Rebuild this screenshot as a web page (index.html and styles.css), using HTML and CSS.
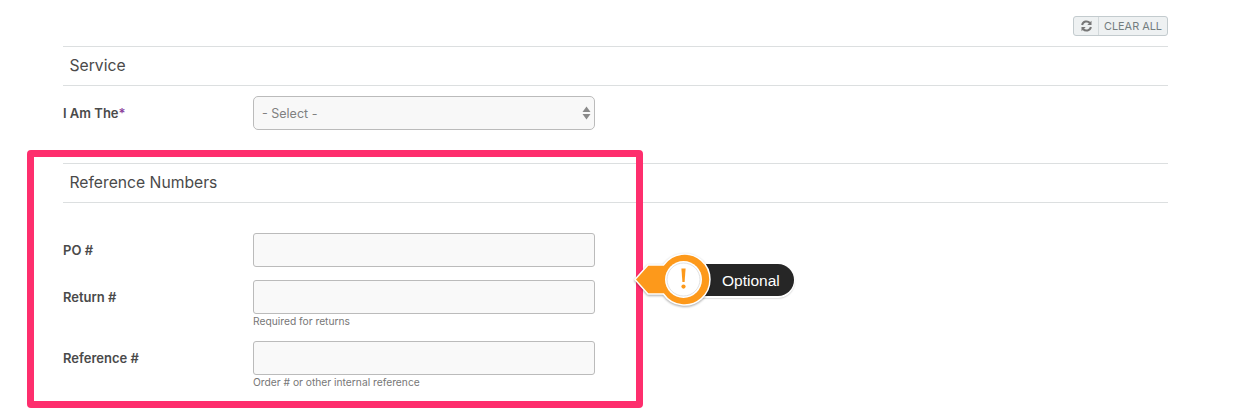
FILE: index.html
```html
<!DOCTYPE html>
<html lang="en">
<head>
    <meta charset="UTF-8">
    <meta name="viewport" content="width=device-width, initial-scale=1.0">
    <title>Reference Numbers</title>
    <link rel="stylesheet" href="styles.css">
</head>
<body>
    <div class="page">
        <div class="toolbar">
            <button class="clear-button">
                <span class="clear-icon">
                    <svg width="13" height="12" viewBox="0 0 12 12">
                        <path d="M1.6 5A4.5 4.5 0 0 1 9.4 3" fill="none" stroke="#777" stroke-width="2"/>
                        <path d="M11 0.8V5H6.8Z" fill="#777"/>
                        <path d="M10.4 7A4.5 4.5 0 0 1 2.6 9" fill="none" stroke="#777" stroke-width="2"/>
                        <path d="M1 11.2V7H5.2Z" fill="#777"/>
                    </svg>
                </span>
                <span class="clear-text">CLEAR ALL</span>
            </button>
        </div>

        <h2 class="section-title service-title">Service</h2>
        <div class="form-row select-row">
            <label class="field-label">I Am The<span class="required">*</span></label>
            <div class="select-box">
                <span>- Select -</span>
                <svg width="9" height="14" viewBox="0 0 9 14">
                    <path d="M4.5 0.5L8.5 6H0.5Z" fill="#8a8a8a"/>
                    <path d="M4.5 13.5L8.5 8H0.5Z" fill="#8a8a8a"/>
                </svg>
            </div>
        </div>

        <h2 class="section-title reference-title">Reference Numbers</h2>
        <div class="form-row po-row">
            <label class="field-label">PO #</label>
            <div class="field"><input class="text-input" type="text"></div>
        </div>
        <div class="form-row return-row">
            <label class="field-label">Return #</label>
            <div class="field">
                <input class="text-input" type="text">
                <div class="help-text">Required for returns</div>
            </div>
        </div>
        <div class="form-row reference-row">
            <label class="field-label">Reference #</label>
            <div class="field">
                <input class="text-input" type="text">
                <div class="help-text">Order # or other internal reference</div>
            </div>
        </div>
    </div>

    <div class="highlight-box"></div>

    <div class="callout">
        <span class="callout-label">Optional</span>
        <svg class="callout-badge" width="80" height="60" viewBox="0 0 80 60">
            <path d="M1 29.5L14 15H29.5A25.5 25.5 0 1 1 29.5 44H14Z" fill="#fd991b" stroke="#fff" stroke-width="1.5"/>
            <circle cx="49.5" cy="29.5" r="18.5" fill="#fff"/>
            <circle cx="49.5" cy="29.5" r="16.5" fill="#fff" stroke="#e2e2e2" stroke-width="1"/>
            <path d="M47.4 18.5h4.2l-1 13.5h-2.2Z" fill="#fd991b"/>
            <circle cx="49.5" cy="36.6" r="2.1" fill="#fd991b"/>
        </svg>
    </div>
</body>
</html>
```

FILE: styles.css
```css
* {
    box-sizing: border-box;
}
body {
    margin: 0;
    background-color: #fff;
    color: #4a4a4a;
    font-family: "Inter", "Liberation Sans", sans-serif;
}
.page {
    width: 1105px;
    margin-left: 63px;
    padding-top: 16px;
}
.toolbar {
    display: flex;
    justify-content: flex-end;
    height: 30px;
}
.clear-button {
    display: flex;
    width: 95px;
    height: 20px;
    padding: 0;
    background-color: #eef1f2;
    border: 1px solid #c3cbce;
    border-radius: 3px;
    font-family: inherit;
}
.clear-icon {
    display: flex;
    align-items: center;
    justify-content: center;
    width: 25px;
    height: 18px;
    border-right: 1px solid #d3d9db;
}
.clear-text {
    flex: 1;
    font-size: 10.9px;
    line-height: 18px;
    color: #737d7f;
}
.section-title {
    margin: 0;
    height: 40px;
    padding-left: 6.5px;
    border-top: 1px solid #dcdfe0;
    border-bottom: 1px solid #dcdfe0;
    font-size: 15.7px;
    font-weight: 400;
    line-height: 38px;
    color: #4a4a4a;
}
.reference-title {
    margin-top: 33px;
}
.form-row {
    display: flex;
}
.select-row {
    margin-top: 10px;
}
.po-row {
    margin-top: 30px;
}
.return-row {
    margin-top: 13px;
}
.reference-row {
    margin-top: 13px;
}
.field-label {
    width: 190px;
    height: 34px;
    font-size: 13px;
    font-weight: 600;
    line-height: 35px;
    color: #4a4a4a;
}
.required {
    color: #8b3f9b;
}
.select-box {
    display: flex;
    align-items: center;
    justify-content: space-between;
    width: 342px;
    height: 34px;
    padding: 0 3px 0 8px;
    background-color: #f8f8f8;
    border: 1px solid #bbb;
    border-radius: 5px;
    font-size: 12.5px;
    color: #808080;
}
.field {
    width: 342px;
}
.text-input {
    display: block;
    width: 342px;
    height: 34px;
    background-color: #f9f9f9;
    border: 1px solid #bbb;
    border-radius: 3px;
}
.help-text {
    height: 13px;
    margin-top: 1px;
    font-size: 10.25px;
    line-height: 13px;
    color: #777;
}
.highlight-box {
    position: absolute;
    left: 27px;
    top: 150px;
    width: 616px;
    height: 258px;
    border: 7px solid #fe2e6d;
    border-radius: 4px;
}
.callout {
    position: absolute;
    left: 634px;
    top: 250px;
    width: 160px;
    height: 60px;
}
.callout-badge {
    position: absolute;
    left: 0;
    top: 0;
    filter: drop-shadow(0 1px 1px rgba(0, 0, 0, 0.35));
}
.callout-label {
    position: absolute;
    left: 50px;
    top: 14px;
    width: 110px;
    height: 32px;
    padding-left: 38px;
    background-color: #262626;
    border-radius: 16px;
    box-shadow: 0 1px 0 1px #fff, 0 2px 2px rgba(0, 0, 0, 0.4);
    color: #fff;
    font-family: "Liberation Sans", sans-serif;
    font-size: 15.5px;
    line-height: 33px;
}
```
